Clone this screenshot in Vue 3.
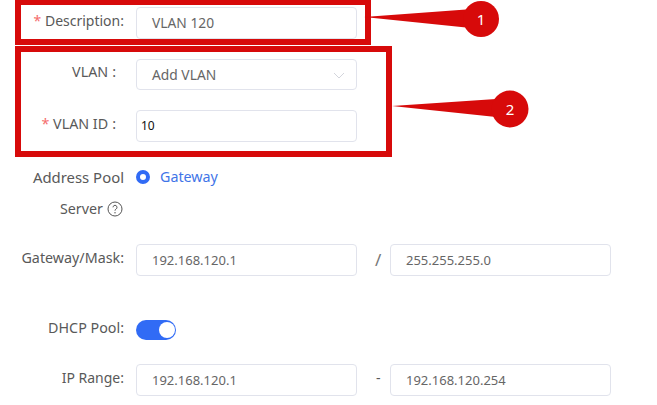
<template>
  <div class="page">
    <form class="form" @submit.prevent>
      <div class="row row-input">
        <label class="label label-small"><span class="req">*</span> Description:</label>
        <div class="field">VLAN 120</div>
      </div>
      <div class="row row-input">
        <label class="label label-short">VLAN<span class="colon">:</span></label>
        <div class="field select">
          Add VLAN
          <svg class="arrow" width="12" height="7" viewBox="0 0 12 7">
            <path d="M1 1l5 5 5-5" fill="none" stroke="#d3d5dc" stroke-width="1" />
          </svg>
        </div>
      </div>
      <div class="row row-input">
        <label class="label label-short"><span class="req">*</span> VLAN ID<span class="colon">:</span></label>
        <div class="field typed">10</div>
      </div>
      <div class="row row-pool">
        <label class="label label-pool">
          <span class="pool-name">Address Pool</span>
          <span class="server">
            Server
            <svg class="help" width="16" height="16" viewBox="0 0 16 16">
              <circle cx="8" cy="8" r="7" fill="none" stroke="#555" stroke-width="1" />
              <path d="M6 6.3a2 2 0 1 1 3.1 1.7c-.7.5-1.1.8-1.1 1.7" fill="none" stroke="#555" stroke-width="1" />
              <circle cx="8" cy="11.7" r=".7" fill="#555" />
            </svg>
          </span>
        </label>
        <div class="radio">
          <span class="dot"></span>
          <span class="radio-text">Gateway</span>
        </div>
      </div>
      <div class="row row-input row-gateway">
        <label class="label">Gateway/Mask:</label>
        <div class="field ip">192.168.120.1</div>
        <span class="sep slash">/</span>
        <div class="field ip">255.255.255.0</div>
      </div>
      <div class="row row-switch">
        <label class="label">DHCP Pool:</label>
        <span class="switch"><span class="knob"></span></span>
      </div>
      <div class="row row-input row-range">
        <label class="label label-small">IP Range:</label>
        <div class="field ip">192.168.120.1</div>
        <span class="sep">-</span>
        <div class="field ip">192.168.120.254</div>
      </div>
    </form>

    <!-- red annotations drawn over the form -->
    <div class="box box-one"></div>
    <div class="box box-two"></div>
    <svg class="callouts" width="657" height="405" viewBox="0 0 657 405">
      <path d="M364 17L466 9.5V27.5Z" fill="#d70a0a" />
      <circle cx="481" cy="19" r="18" fill="#d70a0a" />
      <text x="481" y="25" class="num">1</text>
      <path d="M392 106L496 99V117Z" fill="#d70a0a" />
      <circle cx="510" cy="109" r="18.5" fill="#d70a0a" />
      <text x="510" y="115" class="num">2</text>
    </svg>
  </div>
</template>

<script setup>
</script>

<style>
html,
body {
  background: #fff;
}
</style>

<style scoped>
.page {
  position: relative;
  width: 657px;
  height: 405px;
  overflow: hidden;
  background: #fff;
  font-family: "Noto Sans", "Open Sans", sans-serif;
  font-size: 14.3px;
  color: #595959;
}

.form {
  padding-top: 7px;
}

.row {
  display: flex;
  align-items: center;
}

.row-input {
  height: 31.5px;
  margin-bottom: 20px;
}

.label {
  box-sizing: border-box;
  width: 124px;
  margin-right: 12px;
  flex: none;
  text-align: right;
  white-space: nowrap;
  line-height: 1;
  position: relative;
  top: -2px;
}

.label-small {
  font-size: 14px;
}

.label-short {
  padding-right: 8px;
}

.req {
  color: #f56c6c;
}

.colon {
  margin-left: 4px;
}

.field {
  position: relative;
  box-sizing: border-box;
  width: 220.5px;
  height: 31.5px;
  flex: none;
  padding: 0 15px;
  display: flex;
  align-items: center;
  background: #fff;
  border: 1px solid #e1e3ec;
  border-radius: 4px;
  font-size: 13.8px;
  color: #666;
}

.ip {
  font-size: 13px;
}

.typed {
  padding-left: 4px;
  font-size: 12px;
  color: #111;
}

.arrow {
  position: absolute;
  right: 11px;
  top: 12px;
}

.row-pool {
  align-items: flex-start;
  height: 82.5px;
}

.label-pool {
  display: flex;
  flex-direction: column;
  align-items: flex-end;
  gap: 16px;
  top: 0;
  padding-top: 8px;
  line-height: 15px;
}

.pool-name {
  font-size: 14.9px;
}

.server {
  display: flex;
  align-items: center;
  gap: 4px;
  margin-right: 1px;
}

.help {
  flex: none;
}

.radio {
  display: flex;
  align-items: center;
  gap: 10px;
  height: 30px;
}

.dot {
  box-sizing: border-box;
  width: 14px;
  height: 14px;
  border-radius: 50%;
  border: 4.5px solid #316bf5;
  background: #fff;
}

.radio-text {
  color: #3f75e8;
}

.sep {
  box-sizing: border-box;
  width: 33.5px;
  padding-left: 10px;
  flex: none;
  text-align: center;
  position: relative;
  top: -2px;
}

.slash {
  font-size: 17px;
  color: #777;
  top: 0;
}

.row-gateway {
  margin-bottom: 38.5px;
}

.row-switch {
  height: 32px;
  margin-bottom: 18px;
}

.switch {
  position: relative;
  display: block;
  width: 40px;
  height: 20px;
  border-radius: 10px;
  background: #316bf5;
}

.knob {
  position: absolute;
  top: 2px;
  right: 1.5px;
  width: 16px;
  height: 16px;
  border-radius: 50%;
  background: #fff;
}

.box {
  position: absolute;
  left: 15px;
  box-sizing: border-box;
  border: 6px solid #d70a0a;
  pointer-events: none;
}

.box-one {
  top: -1px;
  width: 356px;
  height: 46px;
}

.box-two {
  top: 46px;
  width: 377px;
  height: 111px;
}

.callouts {
  position: absolute;
  left: 0;
  top: 0;
  pointer-events: none;
}

.num {
  font-family: "Noto Sans", sans-serif;
  font-size: 15px;
  fill: #fff;
  text-anchor: middle;
}
</style>
